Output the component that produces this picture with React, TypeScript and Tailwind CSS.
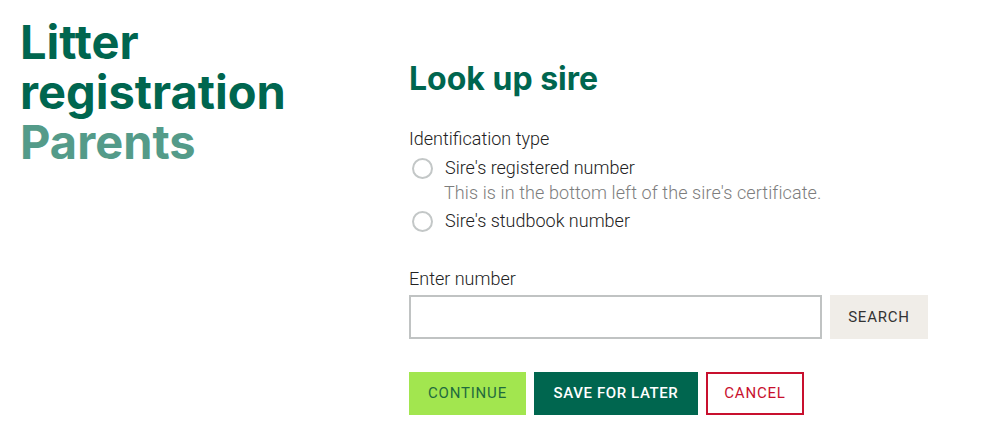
import { useState } from "react";

const sans = "font-['Inter','Noto_Sans',sans-serif]";
const body = "font-['Roboto','Liberation_Sans',sans-serif]";

const options = [
  { id: "registered", label: "Sire's registered number", hint: "This is in the bottom left of the sire's certificate." },
  { id: "studbook", label: "Sire's studbook number" },
];

function Radio({ label, checked, onSelect }: { label: string; checked: boolean; onSelect: () => void }) {
  return (
    <button type="button" onClick={onSelect} className="flex h-7 items-center text-left">
      <span className="ml-[3px] flex h-[21px] w-[21px] items-center justify-center rounded-full border-2 border-[#c3c7c7]">
        {checked && <span className="h-[9px] w-[9px] rounded-full bg-[#00664f]" />}
      </span>
      <span className="ml-3 text-lg font-light text-[#222222]">{label}</span>
    </button>
  );
}

export default function App() {
  const [type, setType] = useState("");
  const [value, setValue] = useState("");

  return (
    <div className={`flex min-h-screen bg-white ${body}`}>
      <div className="w-[409px] shrink-0 pl-5 pt-[17px]">
        <h1 className={`${sans} text-[47px] font-bold leading-[50px] text-[#00664f]`}>
          Litter
          <br />
          registration
          <br />
          <span className="text-[#549b89]">Parents</span>
        </h1>
      </div>

      <main className="pt-[61px]">
        <h2 className={`${sans} text-[32px] font-bold leading-9 text-[#00664f]`}>Look up sire</h2>

        <fieldset className="mt-[30px]">
          <legend className="text-lg font-light leading-6 text-[#222222]">Identification type</legend>
          <div className="mt-[3px] flex flex-col">
            {options.map((o) => (
              <div key={o.id} className="flex flex-col">
                <Radio label={o.label} checked={type === o.id} onSelect={() => setType(o.id)} />
                {o.hint && (
                  <p className="mb-[3px] pl-[35px] text-lg font-light leading-[22px] tracking-[0.1px] text-[#7d7d7d]">
                    {o.hint}
                  </p>
                )}
              </div>
            ))}
          </div>
        </fieldset>

        <label className="mt-[32px] block text-lg font-light leading-6 text-[#222222]" htmlFor="number">
          Enter number
        </label>
        <div className="mt-[4px] flex gap-2">
          <input
            id="number"
            value={value}
            onChange={(e) => setValue(e.target.value)}
            className="h-[44px] w-[413px] border-2 border-[#c0c3c3] px-3 text-lg text-[#333333] outline-none"
          />
          <button type="button" className="h-[44px] w-[98px] bg-[#f0ede8] text-[15px] tracking-[0.8px] text-[#333333]">
            SEARCH
          </button>
        </div>

        <div className="mt-[33px] flex gap-2">
          <button type="button" className="h-[43px] w-[117px] bg-[#a2e64f] text-[15px] tracking-[0.8px] text-[#1f6b3e]">
            CONTINUE
          </button>
          <button type="button" className="h-[43px] w-[164px] bg-[#00664f] text-[15px] font-medium tracking-[0.6px] text-white">
            SAVE FOR LATER
          </button>
          <button type="button" className="h-[43px] w-[98px] border-2 border-[#c8102e] bg-white text-[15px] tracking-[0.8px] text-[#c8102e]">
            CANCEL
          </button>
        </div>
      </main>
    </div>
  );
}
